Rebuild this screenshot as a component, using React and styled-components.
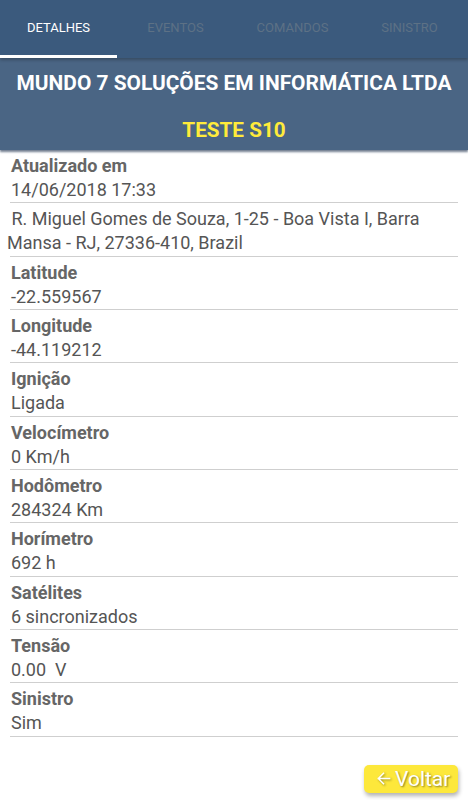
import React, { Component } from 'react'
import styled, { createGlobalStyle } from 'styled-components'

const GlobalStyle = createGlobalStyle`
    html, body {
        margin: 0;
        padding: 0;
        background: #fff;
        font-family: Roboto, "Liberation Sans", sans-serif;
    }
`

const tabs = ['Detalhes', 'Eventos', 'Comandos', 'Sinistro']

const rows = [
    { label: 'Atualizado em', value: '14/06/2018 17:33' },
    { value: '\u00a0R. Miguel Gomes de Souza, 1-25 - Boa Vista I, Barra Mansa - RJ, 27336-410, Brazil', address: true },
    { label: 'Latitude', value: '-22.559567' },
    { label: 'Longitude', value: '-44.119212' },
    { label: 'Ignição', value: 'Ligada' },
    { label: 'Velocímetro', value: '0 Km/h' },
    { label: 'Hodômetro', value: '284324 Km' },
    { label: 'Horímetro', value: '692 h' },
    { label: 'Satélites', value: '6 sincronizados' },
    { label: 'Tensão', value: '0.00\u00a0\u00a0V' },
    { label: 'Sinistro', value: 'Sim' }
]

class App extends Component {
    constructor(props) {
        super(props)
        this.state = {
            tab: 0
        }
    }

    render() {
        return (
            <Page>
                <GlobalStyle/>
                <TabBar>
                    {tabs.map((t, i) => (
                        <Tab key={t} active={i === this.state.tab} onClick={() => this.setState({tab: i})}>{t}</Tab>
                    ))}
                </TabBar>
                <Header>
                    <Title>MUNDO 7 SOLUÇÕES EM INFORMÁTICA LTDA</Title>
                    <Plate>TESTE S10</Plate>
                </Header>
                <List>
                    {rows.map((r, i) => (
                        <Row key={i}>
                            {r.label && <Label>{r.label}</Label>}
                            <Value shift={r.address}>{r.value}</Value>
                        </Row>
                    ))}
                </List>
                <Footer>
                    <BackButton>
                        <svg width="15" height="15" viewBox="0 0 16 16" fill="none" stroke="#fff" strokeWidth="1.6" strokeLinecap="square">
                            <path d="M14.5 8H2.5M8 2.5L2.5 8l5.5 5.5"/>
                        </svg>
                        Voltar
                    </BackButton>
                </Footer>
            </Page>
        )
    }
}

const Page = styled.div`
    width: 468px;
    height: 800px;
    overflow: hidden;
    display: flex;
    flex-direction: column;
`

const TabBar = styled.div`
    display: flex;
    height: 58px;
    flex-shrink: 0;
    background-color: #3b5a7d;
    position: relative;
    z-index: 2;
    box-shadow: 0 2px 3px rgba(0, 0, 0, 0.25);
`

const Tab = styled.div`
    flex: 1;
    display: flex;
    align-items: center;
    justify-content: center;
    padding-bottom: 1px;
    font-size: 13px;
    text-transform: uppercase;
    color: ${props => props.active ? '#ffffff' : '#5d7185'};
    border-bottom: 3px solid ${props => props.active ? '#ffffff' : 'transparent'};
    box-sizing: border-box;
`

const Header = styled.div`
    background-color: #4a6584;
    height: 92px;
    flex-shrink: 0;
    display: flex;
    flex-direction: column;
    align-items: center;
    padding-top: 13px;
    box-sizing: border-box;
    box-shadow: 0 2px 2px rgba(20, 40, 70, 0.6);
    position: relative;
    z-index: 1;
`

const Title = styled.div`
    color: #ffffff;
    font-weight: bold;
    font-size: 20.9px;
    line-height: 24px;
    white-space: nowrap;
`

const Plate = styled.div`
    color: #ffeb3b;
    font-weight: bold;
    font-size: 20.7px;
    line-height: 24px;
    margin-top: 23px;
`

const List = styled.div`
    flex-shrink: 0;
    padding: 0 10px;
`

const Row = styled.div`
    border-bottom: 1px solid #cfcfcf;
    padding: 4px 0 0.33px 1px;
    line-height: 24px;
    font-size: 18px;
`

const Label = styled.div`
    font-weight: bold;
    color: #666666;
`

const Value = styled.div`
    color: #555555;
    margin-left: ${props => props.shift ? '-4px' : '0'};
`

const Footer = styled.div`
    flex-shrink: 0;
    display: flex;
    justify-content: flex-end;
    padding: 28px 10px 0 0;
`

const BackButton = styled.div`
    display: flex;
    align-items: center;
    gap: 4px;
    box-sizing: border-box;
    width: 94px;
    background-color: #fde83b;
    color: #ffffff;
    font-size: 21px;
    height: 28px;
    padding: 0 0 0 12px;
    border-radius: 5px;
    box-shadow: 1px 3px 4px rgba(0, 0, 0, 0.3);
    text-shadow: 1px 1px 2px rgba(0, 0, 0, 0.45);
    svg {
        filter: drop-shadow(1px 1px 1px rgba(0, 0, 0, 0.4));
    }
`

export default App
